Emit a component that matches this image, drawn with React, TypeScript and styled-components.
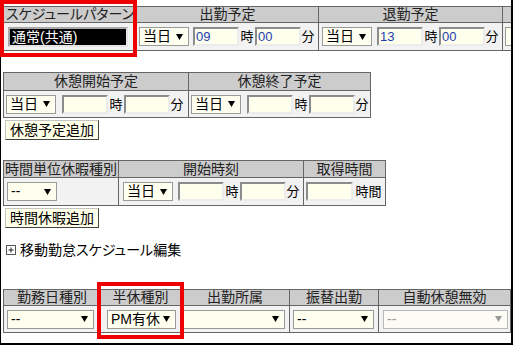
import styled, { createGlobalStyle } from 'styled-components';

const GlobalStyle = createGlobalStyle`
	html, body {
		margin: 0;
		padding: 0;
		background: #fff;
	}
	body {
		font-family: "Liberation Sans", "Noto Sans CJK JP", sans-serif;
		font-size: 14px;
		color: #000;
	}
`;

type TimeSetProps = {
	pad: number;
	gap: number;
	hour?: string;
	minute?: string;
};

const Arrow = ({ color = '#000' }: { color?: string }) => (
	<svg width="7" height="6" viewBox="0 0 7 6">
		<polygon points="0,0 7,0 3.5,6" fill={color} />
	</svg>
);

const Dropdown = ({ width, label, disabled }: { width: number; label: string; disabled?: boolean }) => (
	<SelectBox $w={width} $disabled={disabled}>
		<span>{label}</span>
		<Arrow color={disabled ? '#999' : '#000'} />
	</SelectBox>
);

const TimeSet = ({ pad, gap, hour = '', minute = '' }: TimeSetProps) => (
	<Cell $pad={pad}>
		<Dropdown width={50} label="当日" />
		<Field $w={46} style={{ marginLeft: gap }} readOnly defaultValue={hour} />
		<Unit $w={16}>時</Unit>
		<Field $w={46} readOnly defaultValue={minute} />
		<Unit $w={14}>分</Unit>
	</Cell>
);

const App = () => {
	return (
		<Page>
			<GlobalStyle />
			<Frame>
				<Table $cols="132px 181px 183px 183px" $head={15} $row={27}>
					<HeadCell $palt>スケジュールパターン</HeadCell>
					<HeadCell>出勤予定</HeadCell>
					<HeadCell>退勤予定</HeadCell>
					<HeadCell />
					<Cell $pad={4}>
						<Highlighted>通常(共通)</Highlighted>
					</Cell>
					<TimeSet pad={2} gap={4} hour="09" minute="00" />
					<TimeSet pad={3} gap={5} hour="13" minute="00" />
					{/* next column runs off the right edge of the frame */}
					<Cell $pad={2}>
						<SelectBox $w={50} />
					</Cell>
				</Table>

				<Table $cols="184px 181px" $head={17} $row={26} $top={21}>
					<HeadCell>休憩開始予定</HeadCell>
					<HeadCell>休憩終了予定</HeadCell>
					<TimeSet pad={2} gap={6} />
					<TimeSet pad={2} gap={6} />
				</Table>
				<AddButton>休憩予定追加</AddButton>

				<Table $cols="114px 184px 81px" $head={16} $row={27} $top={20}>
					<HeadCell>時間単位休暇種別</HeadCell>
					<HeadCell>開始時刻</HeadCell>
					<HeadCell>取得時間</HeadCell>
					<Cell $pad={3}>
						<Dropdown width={50} label="--" />
					</Cell>
					<TimeSet pad={4} gap={5} />
					<Cell $pad={2}>
						<Field $w={47} readOnly defaultValue="" />
						<Unit $w={31}>時間</Unit>
					</Cell>
				</Table>
				<AddButton>時間休暇追加</AddButton>

				<Expander>
					<svg width="10" height="10" viewBox="0 0 10 10">
						<rect x="0.5" y="0.5" width="9" height="9" fill="#fff" stroke="#555" />
						<path d="M2.5 5h5M5 2.5v5" stroke="#222" />
					</svg>
					<span>移動勤怠スケジュール編集</span>
				</Expander>

				<Table $cols="96px 79px 108px 88px 131px 120px" $head={15} $row={26} $top={32}>
					<HeadCell>勤務日種別</HeadCell>
					<HeadCell>半休種別</HeadCell>
					<HeadCell>出勤所属</HeadCell>
					<HeadCell>振替出勤</HeadCell>
					<HeadCell>自動休憩無効</HeadCell>
					<HeadCell />
					<Cell $pad={3}>
						<Dropdown width={87} label="--" />
					</Cell>
					<Cell $pad={6}>
						<Dropdown width={69} label="PM有休" />
					</Cell>
					<Cell $pad={2}>
						<Dropdown width={102} label="" />
					</Cell>
					<Cell $pad={3}>
						<Dropdown width={81} label="--" />
					</Cell>
					<Cell $pad={4}>
						<Dropdown width={125} label="--" disabled />
					</Cell>
					<Cell $pad={3} />
				</Table>
			</Frame>
			<Marker $x={0} $y={0} $w={137} $h={57} />
			<Marker $x={97} $y={282} $w={87} $h={57} />
		</Page>
	);
};

const Page = styled.div`
	position: relative;
	width: 514px;
	height: 345px;
	overflow: hidden;
`;

const Frame = styled.div`
	box-sizing: border-box;
	width: 513px;
	height: 345px;
	padding: 6px 0 0 2px;
	border-left: 1px solid #000;
	border-right: 2px solid #000;
	border-bottom: 2px solid #000;
	overflow: hidden;
`;

const Table = styled.div<{ $cols: string; $head: number; $row: number; $top?: number }>`
	display: grid;
	width: max-content;
	grid-template-columns: ${(p) => p.$cols};
	grid-template-rows: ${(p) => p.$head}px ${(p) => p.$row}px;
	gap: 1px;
	margin-top: ${(p) => p.$top ?? 0}px;
	background: #666;
	border: 1px solid #666;
`;

const HeadCell = styled.div<{ $palt?: boolean }>`
	background: #ccc;
	color: #222;
	font-size: 14px;
	line-height: 15px;
	text-align: center;
	white-space: nowrap;
	overflow: hidden;
	display: flex;
	align-items: center;
	justify-content: center;
	font-feature-settings: ${(p) => (p.$palt ? '"palt"' : 'normal')};
`;

const Cell = styled.div<{ $pad: number }>`
	background: #f2f2f2;
	display: flex;
	align-items: center;
	padding-left: ${(p) => p.$pad}px;
	white-space: nowrap;
	overflow: hidden;
`;

const Highlighted = styled.div`
	box-sizing: border-box;
	width: 120px;
	height: 20px;
	padding-left: 2px;
	background: #000;
	color: #fff;
	font-size: 14px;
	line-height: 16px;
	border: 2px solid;
	border-color: #a8a8a8 #e4e4e4 #e4e4e4 #a8a8a8;
`;

const SelectBox = styled.div<{ $w: number; $disabled?: boolean }>`
	box-sizing: border-box;
	flex: none;
	width: ${(p) => p.$w}px;
	height: 19px;
	display: flex;
	align-items: center;
	justify-content: space-between;
	padding: 0 5px 0 3px;
	border: 1px solid ${(p) => (p.$disabled ? '#b8b8b8' : '#9a9a9a')};
	background: ${(p) => (p.$disabled ? '#fcfcf4' : '#fffff0')};
	color: ${(p) => (p.$disabled ? '#999' : '#000')};
	font-size: 14px;
	line-height: 17px;
`;

const Field = styled.input<{ $w: number }>`
	box-sizing: border-box;
	flex: none;
	width: ${(p) => p.$w}px;
	height: 19px;
	margin: 0;
	padding: 0 0 0 1px;
	border: 2px solid;
	border-color: #8c8c8c #ececec #ececec #8c8c8c;
	background: #ffffee;
	color: #1d3fae;
	font-family: "Liberation Sans", sans-serif;
	font-size: 13px;
	outline: none;
`;

const Unit = styled.span<{ $w: number }>`
	flex: none;
	width: ${(p) => p.$w}px;
	font-size: 13px;
	line-height: 15px;
	text-align: center;
	color: #000;
`;

const AddButton = styled.button`
	display: block;
	box-sizing: border-box;
	height: 20px;
	margin: 2px 0 0 2px;
	padding: 0 4px;
	border: 1px solid;
	border-color: #c4c4c4 #444 #444 #c4c4c4;
	background: #ffffe8;
	color: #000;
	font-family: "Liberation Sans", "Noto Sans CJK JP", sans-serif;
	font-size: 14px;
	line-height: 17px;
`;

const Expander = styled.div`
	display: flex;
	align-items: center;
	gap: 4px;
	height: 14px;
	margin-top: 15px;
	padding-left: 3px;
	font-size: 14px;
	line-height: 14px;
	font-feature-settings: "palt";
`;

const Marker = styled.div<{ $x: number; $y: number; $w: number; $h: number }>`
	position: absolute;
	left: ${(p) => p.$x}px;
	top: ${(p) => p.$y}px;
	width: ${(p) => p.$w}px;
	height: ${(p) => p.$h}px;
	box-sizing: border-box;
	border: 4px solid #ee0000;
	pointer-events: none;
`;

export default App;
